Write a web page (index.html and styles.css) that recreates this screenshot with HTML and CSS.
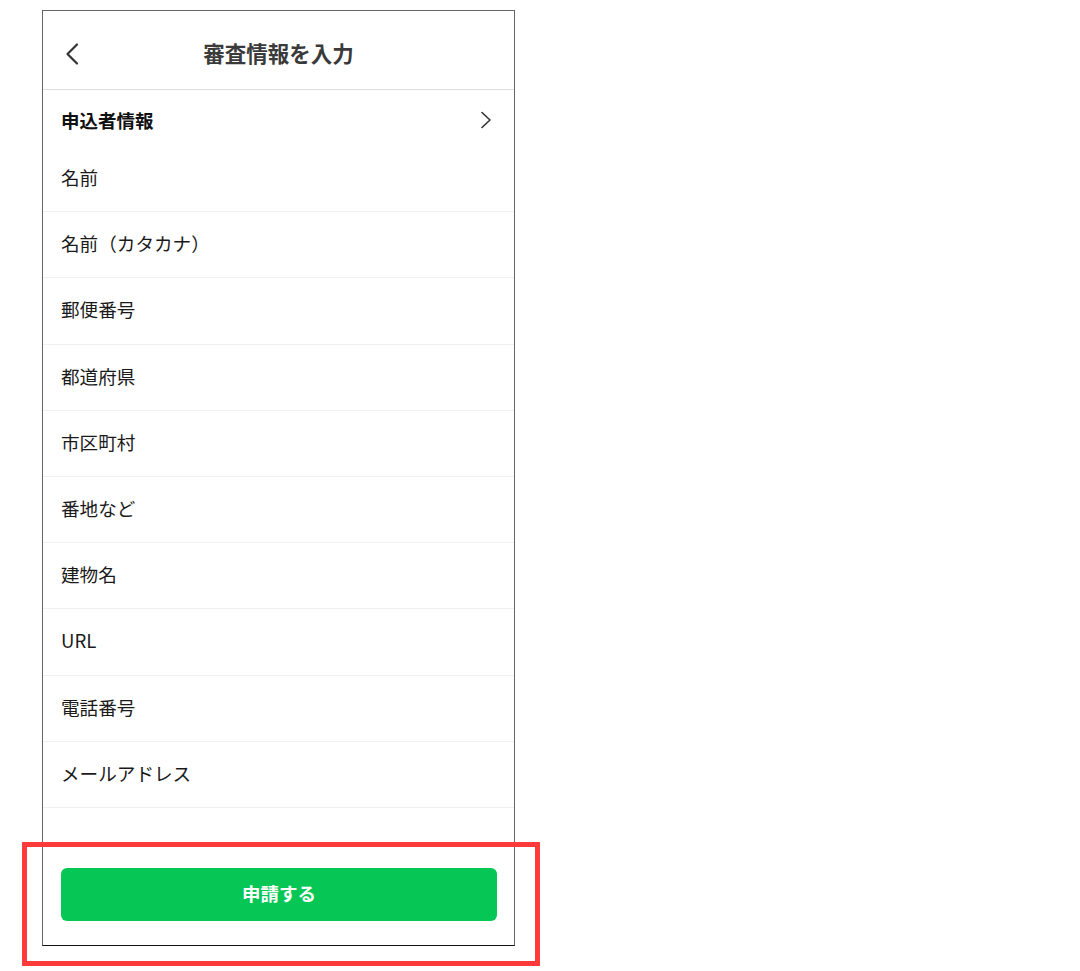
FILE: index.html
```html
<!DOCTYPE html>
<html lang="ja">
<head>
<meta charset="utf-8">
<title>審査情報を入力</title>
<link rel="stylesheet" href="styles.css">
</head>
<body>
<div class="page">
  <div class="phone">
    <header class="header">
      <button class="back" aria-label="戻る">
        <svg width="16" height="24" viewBox="0 0 16 24"><path d="M12 2.5 L2.5 12 L12 21.5" fill="none" stroke="#333" stroke-width="2.2" stroke-linecap="round" stroke-linejoin="round"/></svg>
      </button>
      <h1 class="title">審査情報を入力</h1>
    </header>
    <main class="content">
      <div class="section">
        <span class="section-title">申込者情報</span>
        <svg class="chev" width="12" height="18" viewBox="0 0 12 18"><path d="M2 1.5 L10 9 L2 16.5" fill="none" stroke="#333" stroke-width="1.6" stroke-linecap="round" stroke-linejoin="round"/></svg>
      </div>
      <ul class="list">
        <li class="row">名前</li>
        <li class="row">名前（カタカナ）</li>
        <li class="row">郵便番号</li>
        <li class="row">都道府県</li>
        <li class="row">市区町村</li>
        <li class="row">番地など</li>
        <li class="row">建物名</li>
        <li class="row">URL</li>
        <li class="row">電話番号</li>
        <li class="row">メールアドレス</li>
      </ul>
    </main>
    <footer class="footer">
      <button class="submit">申請する</button>
    </footer>
  </div>
  <div class="highlight"></div>
</div>
</body>
</html>
```

FILE: styles.css
```css
* { box-sizing: border-box; }
html, body {
  margin: 0;
  padding: 0;
  background: #fff;
}
body {
  font-family: "Noto Sans CJK JP", "Noto Sans", sans-serif;
  color: #111;
}
.page {
  position: relative;
  width: 1080px;
  height: 971px;
  padding: 10px 0 0 42px;
}
.phone {
  width: 473px;
  height: 936px;
  border: 1px solid #666;
  border-bottom-color: #111;
  display: flex;
  flex-direction: column;
  background: #fff;
}
.header {
  height: 79px;
  padding-top: 6px;
  border-bottom: 1px solid #dedede;
  display: flex;
  align-items: center;
  justify-content: center;
  position: relative;
}
.back {
  position: absolute;
  left: 22px;
  top: 31px;
  padding: 0;
  border: 0;
  background: none;
  width: 16px;
  height: 24px;
  display: flex;
}
.title {
  margin: 0;
  font-size: 21.5px;
  font-weight: 700;
  color: #3a3a3a;
  line-height: 1;
}
.content {
  flex: 1;
}
.section {
  height: 56px;
  padding: 4px 22px 0 18px;
  display: flex;
  align-items: center;
  justify-content: space-between;
}
.section-title {
  font-size: 18.5px;
  font-weight: 700;
  color: #111;
}
.chev { display: block; margin-top: -1px; }
.list {
  list-style: none;
  margin: 0;
  padding: 0;
}
.row {
  height: 66.2px;
  padding: 0 18px 4px;
  display: flex;
  align-items: center;
  font-size: 18.6px;
  color: #1a1a1a;
  border-bottom: 1px solid #f0f0f0;
}
.footer {
  padding: 0 17px 24px 18px;
}
.submit {
  width: 100%;
  height: 53px;
  border: 0;
  border-radius: 6px;
  background: #06c755;
  color: #fff;
  font-family: "Noto Sans CJK JP", "Noto Sans", sans-serif;
  font-size: 18.5px;
  font-weight: 700;
  display: flex;
  align-items: center;
  justify-content: center;
  padding: 0 0 3px;
}
.highlight {
  position: absolute;
  left: 22px;
  top: 842px;
  width: 518px;
  height: 124px;
  border: 5px solid #ff3a3a;
  pointer-events: none;
}
```
